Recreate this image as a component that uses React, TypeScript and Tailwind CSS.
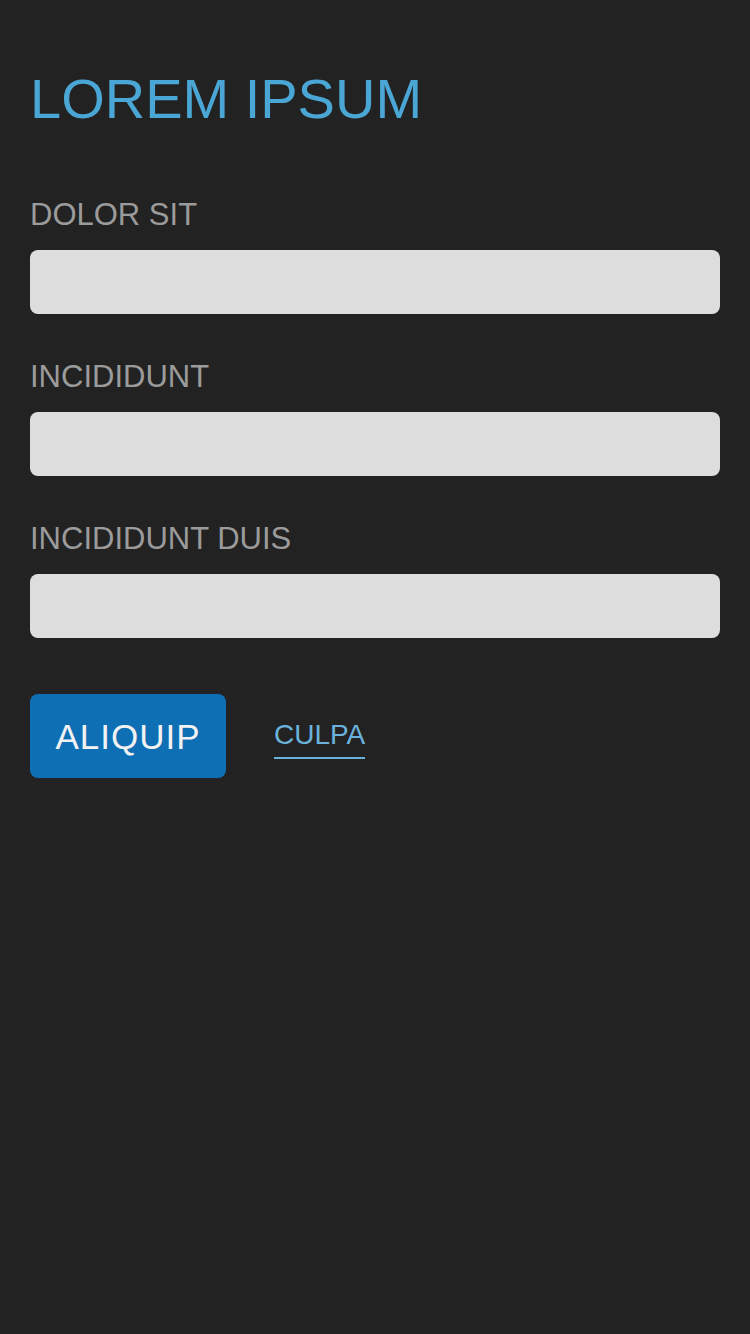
const fields = ["DOLOR SIT", "INCIDIDUNT", "INCIDIDUNT DUIS"];

export default function App() {
  return (
    <div
      className="min-h-[1334px] w-[750px] bg-[#222222] px-[30px] pt-[71px]"
      style={{ fontFamily: '"Liberation Sans", Arial, Helvetica, sans-serif' }}
    >
      <h1 className="text-[56px] leading-[56px] text-[#4aa6d5]">LOREM IPSUM</h1>

      <form className="mt-[72px] flex flex-col gap-[47px]">
        {fields.map((label) => (
          <label key={label} className="flex flex-col gap-[20px]">
            <span className="text-[31px] leading-[31px] text-[#9b9b9b]">{label}</span>
            <input
              type="text"
              className="h-[64px] w-full rounded-[8px] bg-[#dddddd] px-4 text-2xl text-gray-800 outline-none"
            />
          </label>
        ))}
      </form>

      <div className="mt-[56px] flex items-start gap-[48px]">
        <button
          type="button"
          className="flex h-[84px] w-[196px] items-center justify-center rounded-[8px] bg-[#0f6fb5] text-[35px] leading-none tracking-[1px] text-[#f2f2f2]"
        >
          ALIQUIP
        </button>
        <a
          href="#"
          className="mt-[27px] border-b-2 border-[#6ab2dc] pb-[8px] text-[28px] leading-[28px] text-[#6ab2dc]"
        >
          CULPA
        </a>
      </div>
    </div>
  );
}
